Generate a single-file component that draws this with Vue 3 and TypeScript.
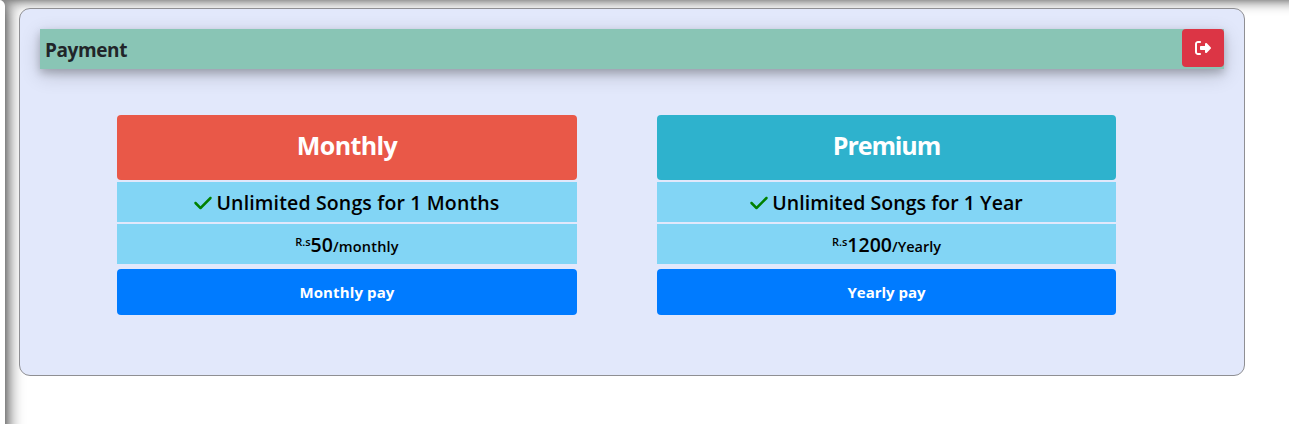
<script setup lang="ts">
interface Plan {
  id: string
  title: string
  feature: string
  amount: string
  period: string
  action: string
}

const plans: Plan[] = [
  { id: 'monthly', title: 'Monthly', feature: 'Unlimited Songs for 1 Months', amount: '50', period: '/monthly', action: 'Monthly pay' },
  { id: 'premium', title: 'Premium', feature: 'Unlimited Songs for 1 Year', amount: '1200', period: '/Yearly', action: 'Yearly pay' },
]
</script>

<template>
  <div class="page">
    <div class="top-shade"></div>
    <aside class="sidebar"></aside>
    <main class="panel">
      <header class="bar">
        <h1 class="heading">Payment</h1>
        <button class="exit" type="button" aria-label="Log out">
          <svg width="16" height="16" viewBox="0 0 512 512" fill="currentColor">
            <path d="M377.9 105.9L500.7 228.7c7.2 7.2 11.3 17.1 11.3 27.3s-4.1 20.1-11.3 27.3L377.9 406.1c-6.4 6.4-15 9.9-24 9.9c-18.7 0-33.9-15.2-33.9-33.9l0-62.1-128 0c-17.7 0-32-14.3-32-32l0-64c0-17.7 14.3-32 32-32l128 0 0-62.1c0-18.7 15.2-33.9 33.9-33.9c9 0 17.6 3.6 24 9.9zM160 96L96 96c-17.7 0-32 14.3-32 32l0 256c0 17.7 14.3 32 32 32l64 0c17.7 0 32 14.3 32 32s-14.3 32-32 32l-64 0c-53 0-96-43-96-96L0 128C0 75 43 32 96 32l64 0c17.7 0 32 14.3 32 32s-14.3 32-32 32z" />
          </svg>
        </button>
      </header>
      <div class="plans">
        <section v-for="plan in plans" :key="plan.id" class="plan" :class="plan.id">
          <h2 class="title">{{ plan.title }}</h2>
          <div class="row">
            <svg class="check" width="18" height="20" viewBox="0 0 448 512" fill="currentColor">
              <path d="M438.6 105.4c12.5 12.5 12.5 32.8 0 45.3l-256 256c-12.5 12.5-32.8 12.5-45.3 0l-128-128c-12.5-12.5-12.5-32.8 0-45.3s32.8-12.5 45.3 0L160 338.7 393.4 105.4c12.5-12.5 32.8-12.5 45.3 0z" />
            </svg>
            <span class="feature">{{ plan.feature }}</span>
          </div>
          <div class="row price">
            <span class="currency">R.s</span><span class="amount">{{ plan.amount }}</span><span class="period">{{ plan.period }}</span>
          </div>
          <button class="pay" type="button">{{ plan.action }}</button>
        </section>
      </div>
    </main>
  </div>
</template>

<style>
body {
  margin: 0;
  background: #fff;
}
</style>

<style scoped>
.page {
  position: relative;
  display: flex;
  box-sizing: border-box;
  width: 1289px;
  height: 424px;
  overflow: hidden;
  background: #fff;
  font-family: "Open Sans", "Noto Sans", sans-serif;
}
.top-shade {
  position: absolute;
  top: -22px;
  left: 0;
  right: -30px;
  height: 20px;
  box-shadow: 0 0 15px #000;
}
.sidebar {
  position: relative;
  width: 45px;
  flex: none;
  margin: 0 0 -30px -40px;
  background: #fff;
  border-top-right-radius: 6px;
  box-shadow: 0 0 18px #000;
}
.panel {
  position: relative;
  box-sizing: border-box;
  width: 1226px;
  height: 368px;
  margin: 8px 0 0 14px;
  padding: 20px;
  border: 1px solid #8f8f93;
  border-radius: 11px;
  background: #e2e8fb;
}
.bar {
  display: flex;
  justify-content: space-between;
  align-items: flex-start;
  height: 40px;
  background: #89c5b5;
  box-shadow: 0 4px 8px rgba(0, 0, 0, 0.2), 0 6px 20px rgba(0, 0, 0, 0.19);
}
.heading {
  margin: 0;
  padding-left: 5px;
  color: #212529;
  font-size: 19px;
  font-weight: 680;
  letter-spacing: -0.4px;
  line-height: 42px;
}
button {
  border: 0;
  padding: 0;
  font-family: inherit;
  color: #fff;
}
.exit {
  display: flex;
  align-items: center;
  justify-content: center;
  width: 42px;
  height: 38px;
  border-radius: 4px;
  background: #dc3545;
}
.plans {
  display: grid;
  grid-template-columns: 460px 459px;
  gap: 80px;
  margin: 46px 0 0 77px;
}
.plan {
  display: flex;
  flex-direction: column;
  color: #000;
}
.title {
  margin: 0 0 2px;
  height: 65px;
  border-radius: 4px;
  background: #e95848;
  color: #fff;
  font-size: 25px;
  font-weight: 700;
  letter-spacing: -0.6px;
  line-height: 60px;
  text-align: center;
}
.premium .title {
  background: #2eb2cd;
  letter-spacing: -1.1px;
}
.row {
  display: flex;
  justify-content: center;
  height: 40px;
  margin-bottom: 2px;
  background: #82d5f5;
  font-size: 19.5px;
  font-weight: 650;
  line-height: 42px;
  white-space: nowrap;
}
.feature {
  letter-spacing: 0.15px;
}
.premium .feature {
  letter-spacing: 0.04px;
}
.check {
  margin: 11px 4px 0 0;
  color: #008000;
}
.price {
  margin-bottom: 5px;
}
.currency {
  font-size: 11px;
  line-height: 36px;
}
.period {
  font-size: 14.5px;
  line-height: 46px;
}
.monthly .period {
  letter-spacing: 0.2px;
}
.pay {
  height: 46px;
  border-radius: 4px;
  background: #007bff;
  font-size: 15px;
  font-weight: 700;
  line-height: 46px;
}
.monthly .pay {
  letter-spacing: 0.12px;
}
</style>
